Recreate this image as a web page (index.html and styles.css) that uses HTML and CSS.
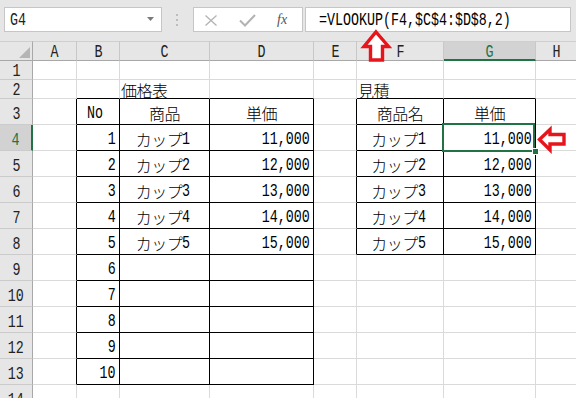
FILE: index.html
```html
<!DOCTYPE html>
<html lang="ja">
<head>
<meta charset="utf-8">
<title>VLOOKUP</title>
<link rel="stylesheet" href="styles.css">
</head>
<body>
<div class="toolbar">
  <div class="namebox"><span class="t">G4</span>
    <svg class="dd" width="8" height="5" viewBox="0 0 8 5"><polygon points="0,0 7,0 3.5,4" fill="#7a7a7a"/></svg>
  </div>
  <div class="dots"><i></i><i></i><i></i></div>
  <div class="btns">
    <svg width="108" height="23" viewBox="0 0 108 23">
      <path d="M11.5 7.5 L22.5 17.5 M22.5 7.5 L11.5 17.5" stroke="#b3b3b3" stroke-width="1.3" fill="none"/>
      <path d="M46 12.5 L51 17.5 L61 7" stroke="#b3b3b3" stroke-width="2" fill="none"/>
      <text x="83" y="16" class="fx">fx</text>
    </svg>
  </div>
  <div class="fbar"><span class="t">=VLOOKUP(F4,$C$4:$D$8,2)</span></div>
</div>

<div class="sheet">
  <div class="ch corner"><svg width="12" height="12" viewBox="0 0 12 12"><polygon points="11,0 11,11 0,11" fill="#b5b5b5"/></svg></div>
  <div class="ch"><span class="t">A</span></div>
  <div class="ch"><span class="t">B</span></div>
  <div class="ch"><span class="t">C</span></div>
  <div class="ch"><span class="t">D</span></div>
  <div class="ch"><span class="t">E</span></div>
  <div class="ch"><span class="t">F</span></div>
  <div class="ch sel"><span class="t">G</span></div>
  <div class="ch"><span class="t">H</span></div>

  <div class="rh s"><span class="t">1</span></div>
  <div class="c"></div><div class="c"></div><div class="c"></div><div class="c"></div><div class="c"></div><div class="c"></div><div class="c"></div><div class="c"></div>

  <div class="rh s"><span class="t">2</span></div>
  <div class="c"></div>
  <div class="c kb"></div>
  <div class="c kb l"><span class="jp">価格表</span></div>
  <div class="c kb"></div>
  <div class="c"></div>
  <div class="c kb l"><span class="jp">見積</span></div>
  <div class="c kb"></div>
  <div class="c"></div>

  <div class="rh"><span class="t">3</span></div>
  <div class="c kr"></div>
  <div class="c k m"><span class="t">No</span></div>
  <div class="c k m"><span class="jp">商品</span></div>
  <div class="c k m"><span class="jp">単価</span></div>
  <div class="c kr"></div>
  <div class="c k m"><span class="jp">商品名</span></div>
  <div class="c k m"><span class="jp">単価</span></div>
  <div class="c"></div>

  <div class="rh selr"><span class="t">4</span></div>
  <div class="c kr"></div>
  <div class="c k r"><span class="t">1</span></div>
  <div class="c k m"><span class="jp">カップ</span><span class="t">1</span></div>
  <div class="c k r"><span class="t">11,000</span></div>
  <div class="c kr"></div>
  <div class="c k m"><span class="jp">カップ</span><span class="t">1</span></div>
  <div class="c k r"><span class="t">11,000</span></div>
  <div class="c"></div>

  <div class="rh"><span class="t">5</span></div>
  <div class="c kr"></div>
  <div class="c k r"><span class="t">2</span></div>
  <div class="c k m"><span class="jp">カップ</span><span class="t">2</span></div>
  <div class="c k r"><span class="t">12,000</span></div>
  <div class="c kr"></div>
  <div class="c k m"><span class="jp">カップ</span><span class="t">2</span></div>
  <div class="c k r"><span class="t">12,000</span></div>
  <div class="c"></div>

  <div class="rh"><span class="t">6</span></div>
  <div class="c kr"></div>
  <div class="c k r"><span class="t">3</span></div>
  <div class="c k m"><span class="jp">カップ</span><span class="t">3</span></div>
  <div class="c k r"><span class="t">13,000</span></div>
  <div class="c kr"></div>
  <div class="c k m"><span class="jp">カップ</span><span class="t">3</span></div>
  <div class="c k r"><span class="t">13,000</span></div>
  <div class="c"></div>

  <div class="rh"><span class="t">7</span></div>
  <div class="c kr"></div>
  <div class="c k r"><span class="t">4</span></div>
  <div class="c k m"><span class="jp">カップ</span><span class="t">4</span></div>
  <div class="c k r"><span class="t">14,000</span></div>
  <div class="c kr"></div>
  <div class="c k m"><span class="jp">カップ</span><span class="t">4</span></div>
  <div class="c k r"><span class="t">14,000</span></div>
  <div class="c"></div>

  <div class="rh"><span class="t">8</span></div>
  <div class="c kr"></div>
  <div class="c k r"><span class="t">5</span></div>
  <div class="c k m"><span class="jp">カップ</span><span class="t">5</span></div>
  <div class="c k r"><span class="t">15,000</span></div>
  <div class="c kr"></div>
  <div class="c k m"><span class="jp">カップ</span><span class="t">5</span></div>
  <div class="c k r"><span class="t">15,000</span></div>
  <div class="c"></div>

  <div class="rh"><span class="t">9</span></div>
  <div class="c kr"></div>
  <div class="c k r"><span class="t">6</span></div>
  <div class="c k"></div>
  <div class="c k"></div>
  <div class="c"></div><div class="c"></div><div class="c"></div><div class="c"></div>

  <div class="rh"><span class="t">10</span></div>
  <div class="c kr"></div>
  <div class="c k r"><span class="t">7</span></div>
  <div class="c k"></div>
  <div class="c k"></div>
  <div class="c"></div><div class="c"></div><div class="c"></div><div class="c"></div>

  <div class="rh"><span class="t">11</span></div>
  <div class="c kr"></div>
  <div class="c k r"><span class="t">8</span></div>
  <div class="c k"></div>
  <div class="c k"></div>
  <div class="c"></div><div class="c"></div><div class="c"></div><div class="c"></div>

  <div class="rh"><span class="t">12</span></div>
  <div class="c kr"></div>
  <div class="c k r"><span class="t">9</span></div>
  <div class="c k"></div>
  <div class="c k"></div>
  <div class="c"></div><div class="c"></div><div class="c"></div><div class="c"></div>

  <div class="rh"><span class="t">13</span></div>
  <div class="c kr"></div>
  <div class="c k r"><span class="t">10</span></div>
  <div class="c k"></div>
  <div class="c k"></div>
  <div class="c"></div><div class="c"></div><div class="c"></div><div class="c"></div>

  <div class="rh"><span class="t">14</span></div>
  <div class="c"></div><div class="c"></div><div class="c"></div><div class="c"></div><div class="c"></div><div class="c"></div><div class="c"></div><div class="c"></div>

  <div class="selbox"></div>
  <div class="handle"></div>
</div>

<svg class="arrows" width="576" height="398" viewBox="0 0 576 398">
  <polygon points="376,32 388.5,46.5 382.5,46.5 382.5,60 370.5,60 370.5,46.5 364,46.5" fill="#fff" stroke="#e8141c" stroke-width="3.4" stroke-linejoin="miter"/>
  <polygon points="539.5,139.5 550,129.5 550,134.5 564,134.5 564,144 550,144 550,150" fill="#fff" stroke="#e8141c" stroke-width="3.4" stroke-linejoin="miter"/>
</svg>
</body>
</html>
```

FILE: styles.css
```css
* { box-sizing: border-box; }

body {
  margin: 0;
  width: 576px;
  height: 398px;
  overflow: hidden;
  position: relative;
  background: #fff;
  color: #000;
  font-family: "Liberation Mono", monospace;
}

.t {
  display: inline-block;
  font-family: "Liberation Mono", monospace;
  font-size: 18px;
  line-height: 16px;
  transform: scaleX(0.74);
  transform-origin: center;
}

.jp {
  font-family: "Noto Sans CJK JP", sans-serif;
  font-size: 16px;
  font-weight: 300;
  line-height: 16px;
  letter-spacing: -0.5px;
}

/* toolbar */
.toolbar {
  height: 41px;
  background: #e6e6e6;
  display: flex;
  align-items: flex-start;
  padding-top: 7px;
}

.namebox {
  margin-left: 4px;
  width: 158px;
  height: 25px;
  background: #fff;
  border: 1px solid #c6c6c6;
  display: flex;
  align-items: center;
  justify-content: space-between;
  padding: 1px 6px 0 5px;
}

.namebox .t { transform-origin: left center; color: #222; }

.dd { margin-top: -1px; }

.dots {
  margin-left: 14px;
  padding-top: 7px;
  display: flex;
  flex-direction: column;
  gap: 3px;
}

.dots i {
  display: block;
  width: 2px;
  height: 2px;
  background: #bcbcbc;
}

.btns {
  margin-left: 15px;
  width: 110px;
  height: 25px;
  background: #fff;
  border: 1px solid #c6c6c6;
}

.btns svg { display: block; }

.fx {
  font-family: "Liberation Serif", serif;
  font-style: italic;
  font-size: 14px;
  fill: #555;
}

.fbar {
  margin-left: 2px;
  width: 266px;
  height: 25px;
  background: #fff;
  border: 1px solid #c6c6c6;
  display: flex;
  align-items: center;
  padding: 1px 0 0 13px;
}

.fbar .t { transform-origin: left center; }

/* sheet */
.sheet {
  position: relative;
  display: grid;
  grid-template-columns: 33px 44px 43px 90px 104px 43px 87px 92px 41px;
  grid-template-rows: 20px 19px 19px repeat(12, 26px);
}

.ch {
  background: #e6e6e6;
  border-top: 1px solid #cfcfcf;
  border-right: 1px solid #c8c8c8;
  border-bottom: 1px solid #a8a8a8;
  display: flex;
  align-items: center;
  justify-content: center;
  padding-top: 2px;
  color: #222;
}

.corner {
  justify-content: flex-end;
  align-items: flex-end;
  padding: 0 1px 1px 0;
  border-right: 1px solid #a8a8a8;
}

.corner svg { display: block; }

.ch.sel {
  background: #d2d2d2;
  border-bottom: 2px solid #217346;
  color: #217346;
}

.rh {
  background: #e6e6e6;
  border-right: 1px solid #a8a8a8;
  border-bottom: 1px solid #cbcbcb;
  display: flex;
  align-items: flex-end;
  justify-content: center;
  padding-bottom: 2px;
  color: #222;
}

.rh.s { align-items: center; padding-bottom: 0; padding-top: 1px; }

.rh.selr {
  background: #d2d2d2;
  border-right: 2px solid #217346;
  color: #217346;
}

.c {
  border-right: 1px solid #dadada;
  border-bottom: 1px solid #dadada;
  display: flex;
  align-items: center;
  padding-top: 2px;
  white-space: nowrap;
}

.c.kr { border-right-color: #000; }
.c.kb { border-bottom-color: #000; }
.c.k { border-right-color: #000; border-bottom-color: #000; }

.c.l {
  align-items: flex-end;
  padding: 0 0 0 1px;
}

.c.m { justify-content: center; }
.c.m .t { transform-origin: left center; }

.c.r { justify-content: flex-end; padding-right: 3px; }
.c.r .t { transform-origin: right center; }

.selbox {
  position: absolute;
  left: 442px;
  top: 82px;
  width: 93px;
  height: 29px;
  border: 2px solid #217346;
}

.handle {
  position: absolute;
  left: 532px;
  top: 107px;
  width: 7px;
  height: 7px;
  background: #217346;
  border: 1px solid #fff;
}

.arrows {
  position: absolute;
  left: 0;
  top: 0;
  pointer-events: none;
}
```
